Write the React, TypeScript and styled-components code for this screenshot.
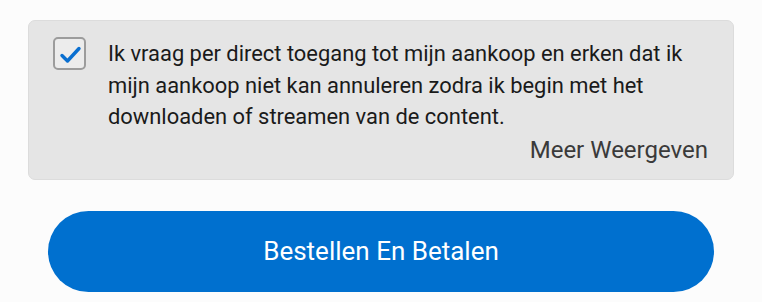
import React, { useState } from "react";
import styled, { createGlobalStyle } from "styled-components";

const Global = createGlobalStyle`
  body {
    margin: 0;
    background: #fcfcfc;
    font-family: Roboto, "Noto Sans", sans-serif;
  }
`;

const App = () => {
  const [checked, setChecked] = useState<boolean>(true);

  return (
    <Page>
      <Global />
      <Panel>
        <Row>
          <Box checked={checked} onClick={() => setChecked(!checked)}>
            {checked && (
              <svg width="26" height="26" viewBox="0 0 26 26">
                <path
                  d="M5 14.5 L10.5 20 L22 7.5"
                  fill="none"
                  stroke="#0a6fd0"
                  strokeWidth="3.4"
                  strokeLinecap="round"
                  strokeLinejoin="round"
                />
              </svg>
            )}
          </Box>
          <Text>
            Ik vraag per direct toegang tot mijn aankoop en erken dat ik mijn
            aankoop niet kan annuleren zodra ik begin met het downloaden of
            streamen van de content.
          </Text>
        </Row>
        <More>Meer Weergeven</More>
      </Panel>
      <Button>Bestellen En Betalen</Button>
    </Page>
  );
};

export default App;

const Page = styled.div`
  width: 762px;
  height: 302px;
  padding: 20px 28px 0 28px;
  box-sizing: border-box;
  display: flex;
  flex-direction: column;
`;

const Panel = styled.div`
  background: #e5e5e5;
  border: 1px solid #dcdcdc;
  border-radius: 7px;
  padding: 17px 25px 15px 24px;
  display: flex;
  flex-direction: column;
`;

const Row = styled.div`
  display: flex;
  align-items: flex-start;
  gap: 22px;
`;

const Box = styled.div<{ checked?: boolean }>`
  width: 33px;
  height: 33px;
  margin-top: -1px;
  flex-shrink: 0;
  box-sizing: border-box;
  border: 2px solid #9c9c9c;
  border-radius: 5px;
  background: #ececec;
  display: flex;
  align-items: center;
  justify-content: center;
  cursor: pointer;
`;

const Text = styled.div`
  font-size: 21.9px;
  line-height: 31.5px;
  color: #1a1a1a;
`;

const More = styled.div`
  align-self: flex-end;
  font-size: 24px;
  line-height: 28px;
  color: #3a3a3a;
  margin-top: 3px;
`;

const Button = styled.button`
  margin: 31px 20px 0 20px;
  height: 81px;
  border: none;
  border-radius: 41px;
  background: #0070cf;
  color: #ffffff;
  font-family: Roboto, "Noto Sans", sans-serif;
  font-size: 26px;
  cursor: pointer;
`;
